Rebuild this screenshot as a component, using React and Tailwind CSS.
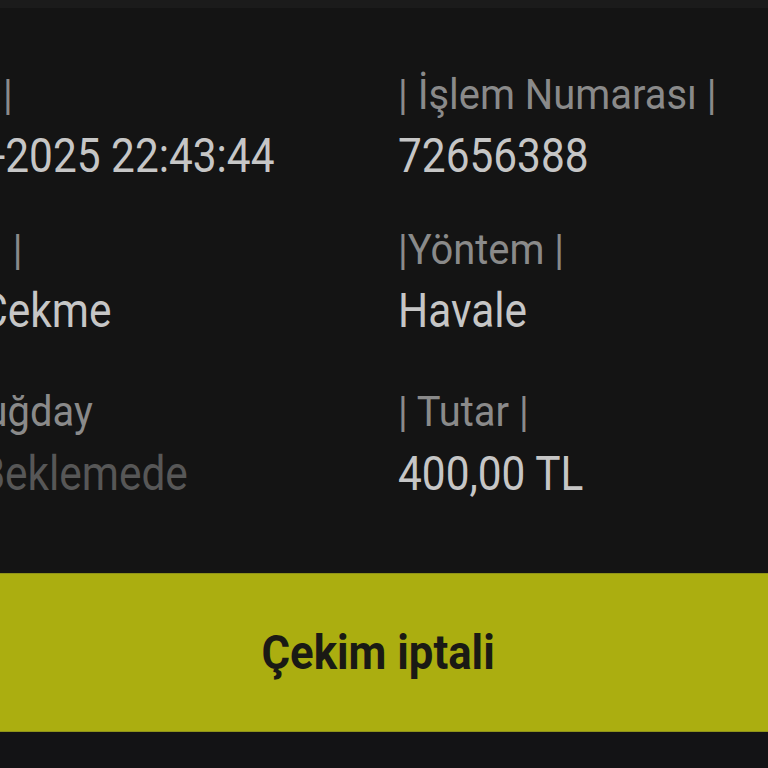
import React from 'react';

// Withdrawal detail (zoomed crop) - two columns of label/value pairs + cancel button
const leftRows = [
  { label: '| İşlem Tarihi |', labelPad: 'pr-[287px]', value: '12-07-2025 22:43:44', valuePad: 'pr-[25px]', valueTone: 'text-[#c6c6c6]' },
  { label: '| İşlem Türü\u00a0\u00a0|', labelPad: 'pr-[278px]', value: 'Para Çekme', valuePad: 'pr-[189px]', valueTone: 'text-[#c6c6c6]' },
  { label: 'Ahmet Buğday', labelPad: 'pr-[207px]', value: 'Beklemede', valuePad: 'pr-[112px]', valueTone: 'text-[#575757]' },
];

const rightRows = [
  { label: '| İşlem Numarası |', value: '72656388' },
  { label: '|Yöntem |', value: 'Havale' },
  { label: '| Tutar |', value: '400,00 TL' },
];

const rowGaps = ['mt-0', 'mt-[40px]', 'mt-[47px]'];
const valueGaps = ['mt-[7px]', 'mt-[7px]', 'mt-[8px]'];

export default function App() {
  return (
    <div className="w-[768px] h-[768px] overflow-hidden bg-[#141414] flex flex-col" style={{ fontFamily: 'Roboto, "Noto Sans", sans-serif' }}>
      <div className="h-[8px] bg-[#1b1b1b] shrink-0" />

      <div className="pt-[62px] flex flex-col">
        {leftRows.map((l, i) => {
          const r = rightRows[i];
          return (
            <div key={i} className={`flex ${rowGaps[i]}`}>
              {/* left column is cut off by the screen edge */}
              <div className="w-[300px] shrink-0 flex flex-col">
                <div className={`flex justify-end whitespace-nowrap ${l.labelPad} text-[42px] leading-[50px] text-[#8a8a8a]`}>
                  <span className="inline-block origin-right scale-x-[0.95]">{l.label}</span>
                </div>
                <div className={`${valueGaps[i]} flex justify-end whitespace-nowrap ${l.valuePad} text-[49px] leading-[58px] ${l.valueTone}`}>
                  <span className="inline-block origin-right scale-x-[0.865]">{l.value}</span>
                </div>
              </div>
              <div className="ml-[98px] flex flex-col whitespace-nowrap">
                <div className="text-[42px] leading-[50px] text-[#8a8a8a]">
                  <span className="inline-block origin-left scale-x-[0.95]">{r.label}</span>
                </div>
                <div className={`${valueGaps[i]} text-[49px] leading-[58px] text-[#c6c6c6]`}>
                  <span className="inline-block origin-left scale-x-[0.865]">{r.value}</span>
                </div>
              </div>
            </div>
          );
        })}
      </div>

      <button className="mt-[70px] h-[159px] w-full shrink-0 bg-[#abae10] border-y border-[#8f931a] flex items-center justify-center pr-[12px]">
        <span className="inline-block scale-x-[0.91] text-[48px] font-bold text-[#1a1a14]">Çekim iptali</span>
      </button>

      <div className="flex-1 bg-[#131315]" />
    </div>
  );
}
